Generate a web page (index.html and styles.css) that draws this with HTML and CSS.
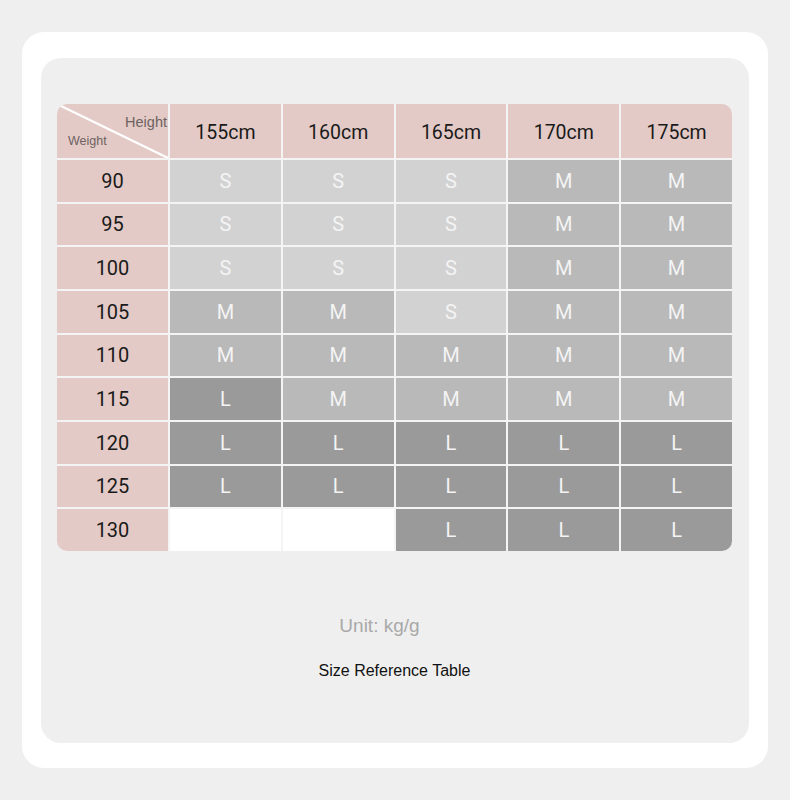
FILE: index.html
```html
<!DOCTYPE html>
<html>
<head>
<meta charset="utf-8">
<link rel="stylesheet" href="styles.css">
</head>
<body>
<div class="card">
  <div class="panel">
    <div class="table">
      <div class="cell head corner">
        <svg class="diag" viewBox="0 0 111 54" preserveAspectRatio="none"><line x1="2" y1="1" x2="111" y2="54" stroke="#ffffff" stroke-width="2.2"/></svg>
        <span class="h-lbl">Height</span>
        <span class="w-lbl">Weight</span>
      </div>
      <div class="cell head">155cm</div>
      <div class="cell head">160cm</div>
      <div class="cell head">165cm</div>
      <div class="cell head">170cm</div>
      <div class="cell head">175cm</div>

      <div class="cell wt">90</div><div class="cell s">S</div><div class="cell s">S</div><div class="cell s">S</div><div class="cell m">M</div><div class="cell m">M</div>
      <div class="cell wt">95</div><div class="cell s">S</div><div class="cell s">S</div><div class="cell s">S</div><div class="cell m">M</div><div class="cell m">M</div>
      <div class="cell wt">100</div><div class="cell s">S</div><div class="cell s">S</div><div class="cell s">S</div><div class="cell m">M</div><div class="cell m">M</div>
      <div class="cell wt">105</div><div class="cell m">M</div><div class="cell m">M</div><div class="cell s">S</div><div class="cell m">M</div><div class="cell m">M</div>
      <div class="cell wt">110</div><div class="cell m">M</div><div class="cell m">M</div><div class="cell m">M</div><div class="cell m">M</div><div class="cell m">M</div>
      <div class="cell wt">115</div><div class="cell l">L</div><div class="cell m">M</div><div class="cell m">M</div><div class="cell m">M</div><div class="cell m">M</div>
      <div class="cell wt">120</div><div class="cell l">L</div><div class="cell l">L</div><div class="cell l">L</div><div class="cell l">L</div><div class="cell l">L</div>
      <div class="cell wt">125</div><div class="cell l">L</div><div class="cell l">L</div><div class="cell l">L</div><div class="cell l">L</div><div class="cell l">L</div>
      <div class="cell wt">130</div><div class="cell empty"></div><div class="cell empty"></div><div class="cell l">L</div><div class="cell l">L</div><div class="cell l">L</div>
    </div>
    <div class="unit">Unit: kg/g</div>
    <div class="caption">Size Reference Table</div>
  </div>
</div>
</body>
</html>
```
FILE: styles.css
```css
html, body {
  margin: 0;
  padding: 0;
  background: #efefef;
}
body {
  width: 790px;
  height: 800px;
  overflow: hidden;
}
.card {
  margin: 32px 0 0 22px;
  width: 746px;
  height: 736px;
  box-sizing: border-box;
  background: #ffffff;
  border-radius: 22px;
  padding: 26px 19px 25px 19px;
}
.panel {
  width: 708px;
  height: 685px;
  box-sizing: border-box;
  background: #efefef;
  border-radius: 20px;
  padding: 46px 17px 0 16px;
  display: flex;
  flex-direction: column;
  align-items: center;
}
.table {
  width: 675px;
  height: 447px;
  display: grid;
  grid-template-columns: 111px repeat(5, 1fr);
  grid-template-rows: 54px repeat(9, 1fr);
  gap: 2px;
  background: #f4f4f4;
  border-radius: 10px;
  overflow: hidden;
}
.cell {
  display: flex;
  align-items: center;
  justify-content: center;
  font-family: Roboto, "Noto Sans", sans-serif;
  font-size: 20px;
  color: #f4f4f4;
}
.head {
  background: #e3cac6;
  color: #1a1a1a;
  font-size: 19.5px;
  padding-top: 2px;
  box-sizing: border-box;
}
.corner {
  position: relative;
}
.diag {
  position: absolute;
  left: 0;
  top: 0;
  width: 100%;
  height: 100%;
}
.h-lbl {
  position: absolute;
  right: 1px;
  top: 10px;
  font-family: "Liberation Sans", sans-serif;
  font-size: 14.5px;
  color: #6e6262;
}
.w-lbl {
  position: absolute;
  left: 11px;
  top: 30px;
  font-family: "Liberation Sans", sans-serif;
  font-size: 12.5px;
  color: #6e6262;
}
.wt {
  background: #e3cac6;
  color: #1a1a1a;
}
.s { background: #d3d2d3; }
.m { background: #b9b9b9; }
.l { background: #9a9a9a; }
.empty { background: #ffffff; }
.unit {
  margin-top: 64px;
  margin-right: 30px;
  font-family: "Liberation Sans", sans-serif;
  font-size: 19px;
  color: #a9a9a9;
  line-height: 22px;
}
.caption {
  margin-top: 24px;
  font-family: "Liberation Sans", sans-serif;
  font-size: 16px;
  color: #111111;
  line-height: 20px;
}
```
